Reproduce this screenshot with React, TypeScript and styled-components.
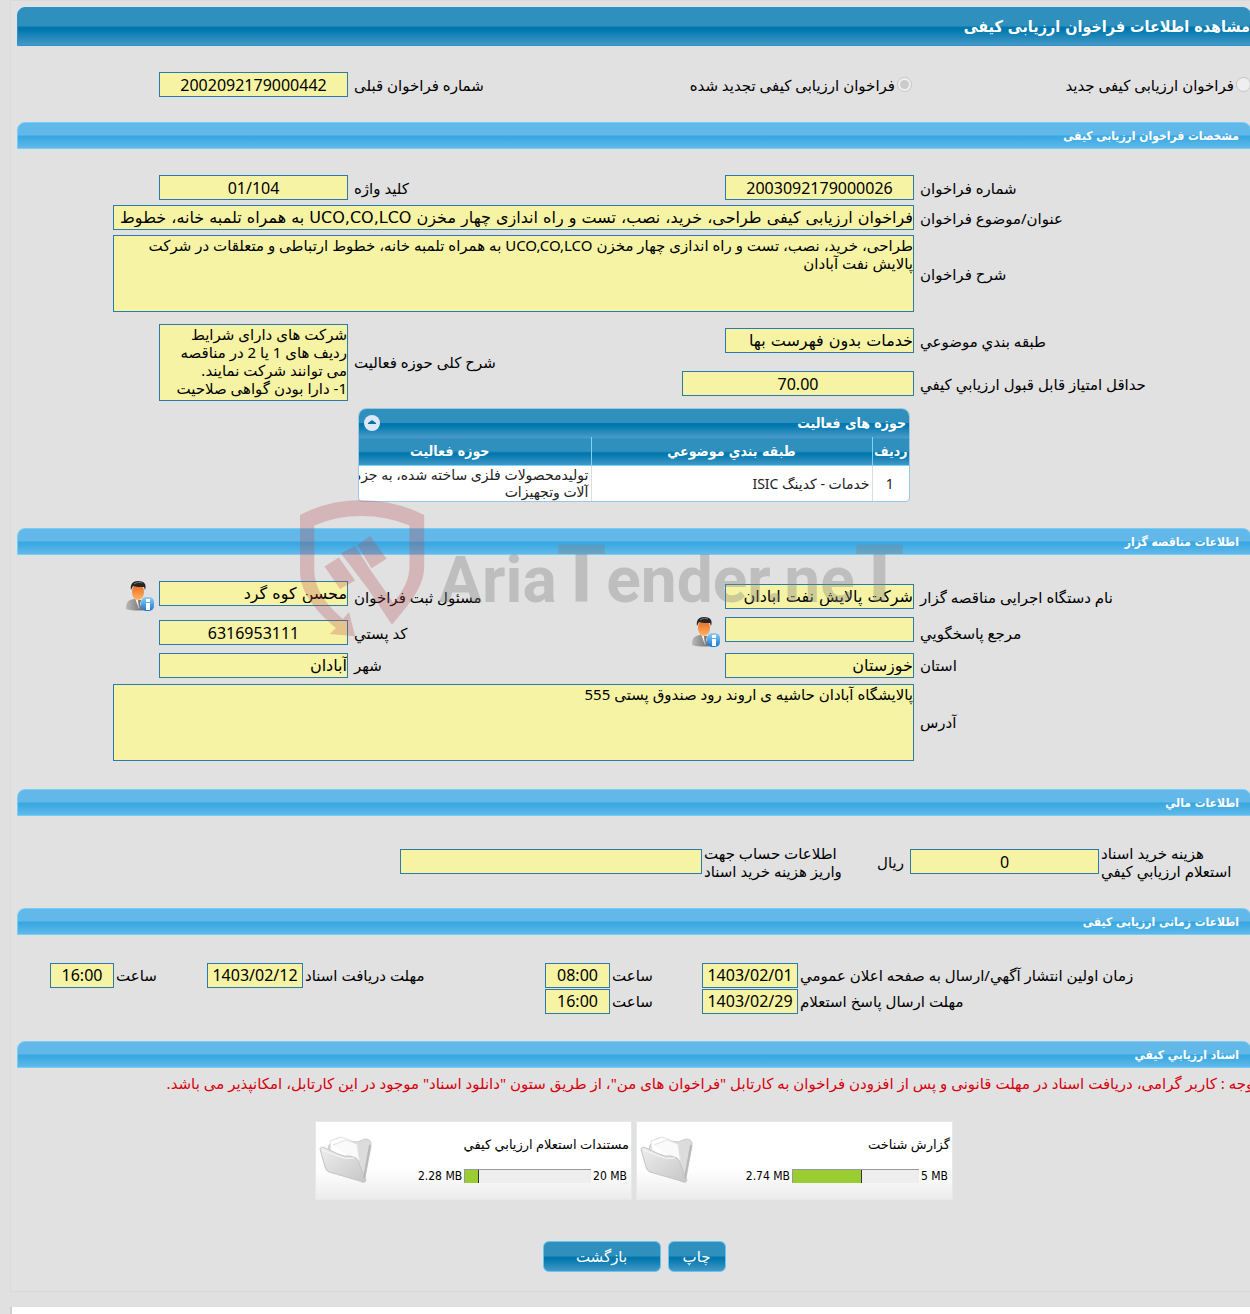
import React, { useId } from "react";
import styled, { createGlobalStyle, css } from "styled-components";

const sans = `"Noto Sans", "DejaVu Sans", sans-serif`;
const wide = `"DejaVu Sans", "Noto Sans", sans-serif`;
const condensed = `"DejaVu Sans Condensed", "DejaVu Sans", sans-serif`;
const darkBlue = `linear-gradient(#2f90be 0 49%, #0077ae 51%, #0077ae 58%, #4599c6)`;
const lightBlue = `linear-gradient(#62b9e9 0 49%, #38a7e1 51%, #3ba9e2 60%, #62b9e9)`;

const GlobalStyle = createGlobalStyle`
  *, *::before, *::after { box-sizing: border-box; }
  body { margin: 0; background: #e0e0e0; font-family: ${sans}; color: #000; }
  input, textarea, button { font-family: inherit; margin: 0; }
`;

const Shell = styled.div`
  position: relative;
  overflow: hidden;
  min-height: 100vh;
  display: flex;
  flex-direction: column;
`;
const Panel = styled.main`
  margin: 0 -1px 0 10px;
  padding: 6px 0 19px 6px;
  border: 1px solid #dadada;
  border-right: 0;
  background: #e1e1e1;
`;
const Footer = styled.div`
  flex: 1;
  min-height: 8px;
  margin: 15px 0 0 10px;
  background: #fff;
  border-left: 2px solid #cfcfcf;
`;
const PageTitle = styled.h1`
  margin: 0;
  height: 39px;
  border: 1px solid #2b92cf;
  border-radius: 8px 8px 0 0;
  background: ${darkBlue};
  color: #fff;
  font-family: ${condensed};
  font-size: 16px;
  line-height: 37px;
`;
const SectionTitle = styled.h2`
  margin: 0;
  padding: 0 11px;
  height: 27px;
  border: 1px solid #74cff7;
  border-radius: 8px 8px 0 0;
  background: ${lightBlue};
  color: #fff;
  font-family: ${condensed};
  font-size: 12px;
  line-height: 27px;
`;

const Body = styled.div<{ $top: number; $bottom: number }>`
  padding: ${(p) => p.$top}px 0 ${(p) => p.$bottom}px;
`;
const FormGrid = styled.div<{ $row?: number; $gap?: number }>`
  display: grid;
  grid-template-columns: 337fr 366fr 200fr 331fr;
  grid-auto-rows: minmax(${(p) => p.$row ?? 25}px, auto);
  row-gap: ${(p) => p.$gap ?? 0}px;
  align-items: center;
`;
const KindRow = styled.div`
  display: grid;
  grid-template-columns: 339fr 364fr 200fr 331fr;
  align-items: center;
`;
const ScheduleGrid = styled.div`
  display: grid;
  grid-template-columns: 453fr 96fr 92fr 65fr 242fr 96fr 93fr 64fr 33fr;
  row-gap: 1px;
  align-items: center;
`;
const CostRow = styled.div`
  display: grid;
  grid-template-columns: 139fr 189fr 68fr 140fr 302fr 383fr;
  align-items: center;
  padding-right: 13px;
`;

const Label = styled.label<{ $tight?: boolean; $rows?: number }>`
  grid-column: ${(p) => (p.$rows ? 3 : "auto")};
  grid-row: ${(p) => (p.$rows ? `1 / span ${p.$rows}` : "auto")};
  padding-left: ${(p) => (p.$tight ? 2 : 6)}px;
  text-align: left;
  font-size: 15px;
  line-height: 18px;
`;
const Unit = styled.span`
  padding-right: 6px;
  font-size: 15px;
  line-height: 18px;
`;
const columnOf = (p: { $wide?: boolean; $rows?: number }) =>
  p.$wide ? "span 3" : p.$rows ? "4" : "auto";
const Cell = styled.div<{ $wide?: boolean; $rows?: number; $top?: boolean }>`
  display: flex;
  gap: 4px;
  min-width: 0;
  align-items: ${(p) => (p.$top ? "flex-start" : "center")};
  grid-column: ${columnOf};
  grid-row: ${(p) => (p.$rows ? `1 / span ${p.$rows}` : "auto")};
`;
const field = css`
  display: block;
  border: 1px solid #2a7bab;
  border-radius: 0;
  background: #f6f4a4;
  color: #000;
  padding: 0;
  outline: 0;
`;
const TextInput = styled.input<{ $w: number; $center?: boolean }>`
  ${field}
  width: ${(p) => p.$w}px;
  height: 25px;
  flex: none;
  font-family: ${(p) => (p.$center ? sans : wide)};
  font-size: 16px;
  text-align: ${(p) => (p.$center ? "center" : "right")};
`;
const TextArea = styled.textarea<{ $w: number }>`
  ${field}
  width: ${(p) => p.$w}px;
  height: 77px;
  flex: none;
  resize: none;
  overflow: hidden;
  font-size: 15px;
  line-height: 18px;
`;
const RadioLabel = styled.label`
  display: flex;
  align-items: center;
  gap: 2px;
  font-size: 15px;
  line-height: 18px;
`;
const Radio = styled.input`
  width: 15px;
  height: 15px;
  margin: 0;
`;
const IconButton = styled.button`
  border: 0;
  padding: 0;
  background: none;
  display: block;
  svg { display: block; }
`;

const GridPanel = styled.section`
  width: 552px;
  margin: 0 auto;
  border: 1px solid #9cc6e2;
  border-radius: 8px 8px 4px 4px;
  overflow: hidden;
  background: #fff;
`;
const GridCaption = styled.div`
  display: flex;
  justify-content: space-between;
  align-items: center;
  height: 28px;
  padding: 0 3px 0 5px;
  background: ${darkBlue};
  color: #fff;
  font-family: ${condensed};
  font-size: 14px;
  font-weight: bold;
`;
const Table = styled.table`
  width: 600px;
  table-layout: fixed;
  border-collapse: collapse;
  font-size: 14px;
  line-height: 17px;
`;
const Th = styled.th<{ $w?: number }>`
  width: ${(p) => (p.$w ? `${p.$w}px` : "auto")};
  height: 28px;
  padding: 0;
  border-top: 1px solid #4599d0;
  border-bottom: 1px solid #7ad4fa;
  border-left: 1px solid #7ad4fa;
  background: ${darkBlue};
  color: #fff;
  font-family: ${condensed};
  font-size: 14px;
  &:last-child { border-left: 0; }
`;
const Td = styled.td<{ $center?: boolean }>`
  height: 35px;
  padding: 0 2px 0 0;
  border-left: 1px solid #ddd;
  white-space: nowrap;
  color: #222;
  text-align: ${(p) => (p.$center ? "center" : "right")};
  &:last-child { border-left: 0; }
`;

const Notice = styled.p`
  margin: 6px -7px 29px 0;
  color: #d9000d;
  font-size: 15px;
  line-height: 18px;
  white-space: nowrap;
`;
const CardRow = styled.div`
  display: flex;
  justify-content: center;
  gap: 4px;
`;
const Card = styled.article`
  display: flex;
  justify-content: space-between;
  align-items: center;
  width: 317px;
  height: 79px;
  padding: 0 2px 0 3px;
  border: 1px solid #e8e8e8;
  background: linear-gradient(#fff 0 60%, #ececec);
  font-size: 13px;
`;
const CardInfo = styled.div`
  display: flex;
  flex-direction: column;
  gap: 16px;
  line-height: 16px;
`;
const Usage = styled.div`
  display: flex;
  align-items: center;
  align-self: flex-start;
  gap: 2px;
  direction: ltr;
  padding-right: 2px;
  font-family: ${condensed};
  font-size: 12px;
`;
const Meter = styled.div`
  width: 127px;
  height: 14px;
  border-top: 1px solid #999;
  border-left: 1px solid #999;
  background: #eee;
`;
const Fill = styled.div`
  height: 100%;
  background: #9acd32;
  border-right: 1px solid #333;
`;
const Actions = styled.div`
  display: flex;
  justify-content: center;
  gap: 7px;
  margin-top: 41px;
`;
const ActionButton = styled.button<{ $w: number }>`
  width: ${(p) => p.$w}px;
  height: 31px;
  padding: 0;
  border: 1px solid #66c6f0;
  border-radius: 6px;
  background: ${darkBlue};
  color: #fff;
  font-size: 15px;
`;
const Watermark = styled.div`
  position: absolute;
  left: 300px;
  top: 500px;
  display: flex;
  direction: ltr;
  pointer-events: none;
  svg { display: block; }
`;
const Brand = styled.span`
  margin: 29px 0 0 14px;
  color: #808080;
  opacity: 0.35;
  font-family: Roboto, "Liberation Sans", sans-serif;
  font-size: 64px;
  line-height: 92px;
  font-weight: 700;
  white-space: nowrap;
  big { font-size: 80px; }
`;

const Shield = () => (
  <svg width="125" height="137" viewBox="50 30 306 412" preserveAspectRatio="none" fill="#b84a50" opacity="0.28" aria-hidden="true">
    <path d="M50 75Q120 30 200 30T354 75V230C354 290 320 340 275 405L218 300 150 190 185 168 222 240 278 338C305 300 318 270 318 225V107Q265 78 200 78T85 107V240C85 300 115 345 155 388L170 367 185 440 123 433 138 415C90 365 50 310 50 245Z" />
    <path d="M110 230 145 203 185 272 148 298ZM190 165 222 138 262 207 225 235Z" />
  </svg>
);

const PersonIcon = () => {
  const id = useId();
  return (
    <svg width="29" height="32" viewBox="0 0 29 32" aria-hidden="true">
      <defs>
        <linearGradient id={`${id}s`} x1="0" x2="1"><stop stopColor="#b9b9b9" /><stop offset="1" stopColor="#555" /></linearGradient>
        <linearGradient id={`${id}f`} x2="0" y2="1"><stop stopColor="#e8661b" /><stop offset="1" stopColor="#ffb265" /></linearGradient>
        <linearGradient id={`${id}i`} x2="0" y2="1"><stop stopColor="#8fd0fb" /><stop offset="1" stopColor="#1675cf" /></linearGradient>
      </defs>
      <path d="M0 28c0-7 2-9 8-10h8c5 1 7 3 7 10-5 2-17 2-23 0Z" fill={`url(#${id}s)`} />
      <path d="m9 17 4 11 4-11Z" fill="#f5f5f5" />
      <path d="m12 19 1 10 2-10Z" fill="#777" />
      <ellipse cx="12" cy="11" rx="6" ry="8" fill={`url(#${id}f)`} />
      <path d="M5 9C4 3 7 0 12 0c6 0 9 3 7 9l-1-3c-4 0-8 0-11-1Z" fill="#252525" />
      <path d="M8 3c3-2 6-2 8-1" stroke="#777" fill="none" />
      <rect x="15" y="16" width="13" height="14" rx="5" fill={`url(#${id}i)`} />
      <path d="M20 18h4v3h-4zM20 22h4v7h-4z" fill="#fff" />
    </svg>
  );
};

const FolderIcon = () => {
  const id = useId();
  return (
    <svg width="54" height="50" viewBox="0 0 54 50" aria-hidden="true">
      <defs>
        <linearGradient id={id} x2="1" y2="1"><stop stopColor="#eee" /><stop offset="1" stopColor="#c6c6c6" /></linearGradient>
      </defs>
      <path d="M10 10 18 3 30 6 38 7 46 4Q53 4 52 11L46 43 40 46 8 20Z" fill="#dcdcdc" stroke="#cdcdcd" />
      <path d="M11 6 22 2 33 6 41 27 31 32 12 20Z" fill="#fff" stroke="#e0e0e0" />
      <path d="m14 10 13-5 11 4 3 20" fill="#fafafa" stroke="#e2e2e2" />
      <path d="M1 14Q2 11 6 13L19 19Q25 22 31 21L37 23Q40 25 41 31L47 45Q46 49 41 46L10 37Q7 36 6 32Z" fill={`url(#${id})`} stroke="#c4c4c4" />
      <path d="M3 15 19 21Q26 25 35 23" fill="none" stroke="#f8f8f8" />
      <path d="M51 10 45 43" stroke="#b9b9b9" strokeWidth="2" />
    </svg>
  );
};

const CollapseIcon = () => (
  <svg width="16" height="16" viewBox="0 0 16 16" aria-hidden="true">
    <circle cx="8" cy="8" r="8" fill="#dde8f6" />
    <path d="M4 9V8L8 5 12 8V9Z" fill="#0a73a8" />
  </svg>
);

type FieldProps = {
  label: React.ReactNode;
  value: string;
  w?: number;
  center?: boolean;
  person?: boolean;
  wide?: boolean;
  tight?: boolean;
};

const Field = ({ label, value, w = 189, center, person, wide, tight }: FieldProps) => {
  const id = useId();
  return (
    <>
      <Label htmlFor={id} $tight={tight}>{label}</Label>
      <Cell $wide={wide} $top={person}>
        <TextInput id={id} $w={w} $center={center} value={value} readOnly />
        {person && <IconButton type="button" aria-label="اطلاعات"><PersonIcon /></IconButton>}
      </Cell>
    </>
  );
};

const AreaField = ({ label, value, w = 801, rows }: { label: string; value: string; w?: number; rows?: number }) => {
  const id = useId();
  return (
    <>
      <Label htmlFor={id} $rows={rows}>{label}</Label>
      <Cell $wide={!rows} $rows={rows}>
        <TextArea id={id} $w={w} value={value} readOnly />
      </Cell>
    </>
  );
};

const FileCard = ({ title, used, total }: { title: string; used: number; total: number }) => (
  <Card>
    <CardInfo>
      <div>{title}</div>
      <Usage>
        <span>{used} MB</span>
        <Meter><Fill style={{ width: `${(used / total) * 100}%` }} /></Meter>
        <span>{total} MB</span>
      </Usage>
    </CardInfo>
    <FolderIcon />
  </Card>
);

export default function App() {
  return (
    <Shell>
      <GlobalStyle />
      <Panel dir="rtl" lang="fa">
        <PageTitle>مشاهده اطلاعات فراخوان ارزیابی کیفی</PageTitle>
        <Body $top={26} $bottom={25}>
          <KindRow>
            <RadioLabel><Radio type="radio" name="kind" disabled />فراخوان ارزیابی کیفی جدید</RadioLabel>
            <RadioLabel><Radio type="radio" name="kind" defaultChecked disabled />فراخوان ارزیابی کیفی تجدید شده</RadioLabel>
            <Field label="شماره فراخوان قبلی" value="2002092179000442" center />
          </KindRow>
        </Body>

        <SectionTitle>مشخصات فراخوان ارزیابی کیفی</SectionTitle>
        <Body $top={26} $bottom={26}>
          <FormGrid $gap={5}>
            <Field label="شماره فراخوان" value="2003092179000026" center />
            <Field label="کلید واژه" value="01/104" center />
            <Field wide w={801} label="عنوان/موضوع فراخوان" value="فراخوان ارزیابی کیفی طراحی، خرید، نصب، تست و راه اندازی چهار مخزن UCO,CO,LCO به همراه تلمبه خانه، خطوط" />
            <AreaField label="شرح فراخوان" value="طراحی، خرید، نصب، تست و راه اندازی چهار مخزن UCO,CO,LCO به همراه تلمبه خانه، خطوط ارتباطی و متعلقات در شرکت پالایش نفت آبادان" />
          </FormGrid>
          <Body $top={7} $bottom={3}>
            <FormGrid $row={43}>
              <Field label="طبقه بندي موضوعي" value="خدمات بدون فهرست بها" />
              <AreaField rows={2} w={189} label="شرح کلی حوزه فعالیت" value={"شرکت های دارای شرایط ردیف های 1 یا 2 در مناقصه می توانند شرکت نمایند.\n1- دارا بودن گواهی صلاحیت"} />
              <Field label="حداقل امتیاز قابل قبول ارزیابي کیفي" value="70.00" w={232} center />
            </FormGrid>
          </Body>
          <GridPanel>
            <GridCaption>
              <span>حوزه های فعالیت</span>
              <IconButton type="button" aria-label="بستن"><CollapseIcon /></IconButton>
            </GridCaption>
            <Table>
              <thead>
                <tr><Th $w={37}>ردیف</Th><Th $w={281}>طبقه بندي موضوعي</Th><Th>حوزه فعالیت</Th></tr>
              </thead>
              <tbody>
                <tr>
                  <Td $center>1</Td>
                  <Td>خدمات - کدینگ ISIC</Td>
                  <Td>تولیدمحصولات فلزی ساخته شده، به جزماشین<br />آلات وتجهیزات</Td>
                </tr>
              </tbody>
            </Table>
          </GridPanel>
        </Body>

        <SectionTitle>اطلاعات مناقصه گزار</SectionTitle>
        <Body $top={26} $bottom={28}>
          <FormGrid $gap={4}>
            <Field label="نام دستگاه اجرایی مناقصه گزار" value="شرکت پالایش نفت ابادان" />
            <Field label="مسئول ثبت فراخوان" value="محسن کوه گرد" person />
            <Field label="مرجع پاسخگويي" value="" person />
            <Field label="کد پستي" value="6316953111" center />
          </FormGrid>
          <Body $top={4} $bottom={0}>
            <FormGrid $gap={6}>
              <Field label="استان" value="خوزستان" />
              <Field label="شهر" value="آبادان" />
              <AreaField label="آدرس" value="پالایشگاه آبادان حاشیه ی اروند رود صندوق پستی 555" />
            </FormGrid>
          </Body>
        </Body>

        <SectionTitle>اطلاعات مالي</SectionTitle>
        <Body $top={28} $bottom={28}>
          <CostRow>
            <Field tight center label={<>هزینه خرید اسناد<br />استعلام ارزیابي کیفي</>} value="0" />
            <Unit>ریال</Unit>
            <Field tight w={302} label={<>اطلاعات حساب جهت<br />واریز هزینه خرید اسناد</>} value="" />
          </CostRow>
        </Body>

        <SectionTitle>اطلاعات زمانی ارزیابی کیفی</SectionTitle>
        <Body $top={28} $bottom={27}>
          <ScheduleGrid>
            <Field tight center w={96} label="زمان اولین انتشار آگهي/ارسال به صفحه اعلان عمومي" value="1403/02/01" />
            <Field tight center w={65} label="ساعت" value="08:00" />
            <Field tight center w={96} label="مهلت دریافت اسناد" value="1403/02/12" />
            <Field tight center w={64} label="ساعت" value="16:00" />
            <span />
            <Field tight center w={96} label="مهلت ارسال پاسخ استعلام" value="1403/02/29" />
            <Field tight center w={65} label="ساعت" value="16:00" />
          </ScheduleGrid>
        </Body>

        <SectionTitle>اسناد ارزیابي کیفي</SectionTitle>
        <Notice>توجه : کاربر گرامی، دریافت اسناد در مهلت قانونی و پس از افزودن فراخوان به کارتابل "فراخوان های من"، از طریق ستون "دانلود اسناد" موجود در این کارتابل، امکانپذیر می باشد.</Notice>
        <CardRow>
          <FileCard title="گزارش شناخت" used={2.74} total={5} />
          <FileCard title="مستندات استعلام ارزیابي کیفي" used={2.28} total={20} />
        </CardRow>
        <Actions>
          <ActionButton type="button" $w={58}>چاپ</ActionButton>
          <ActionButton type="button" $w={118}>بازگشت</ActionButton>
        </Actions>
      </Panel>
      <Footer />
      <Watermark>
        <Shield />
        <Brand>Aria<big>T</big>ender.ne<big>T</big></Brand>
      </Watermark>
    </Shell>
  );
}
